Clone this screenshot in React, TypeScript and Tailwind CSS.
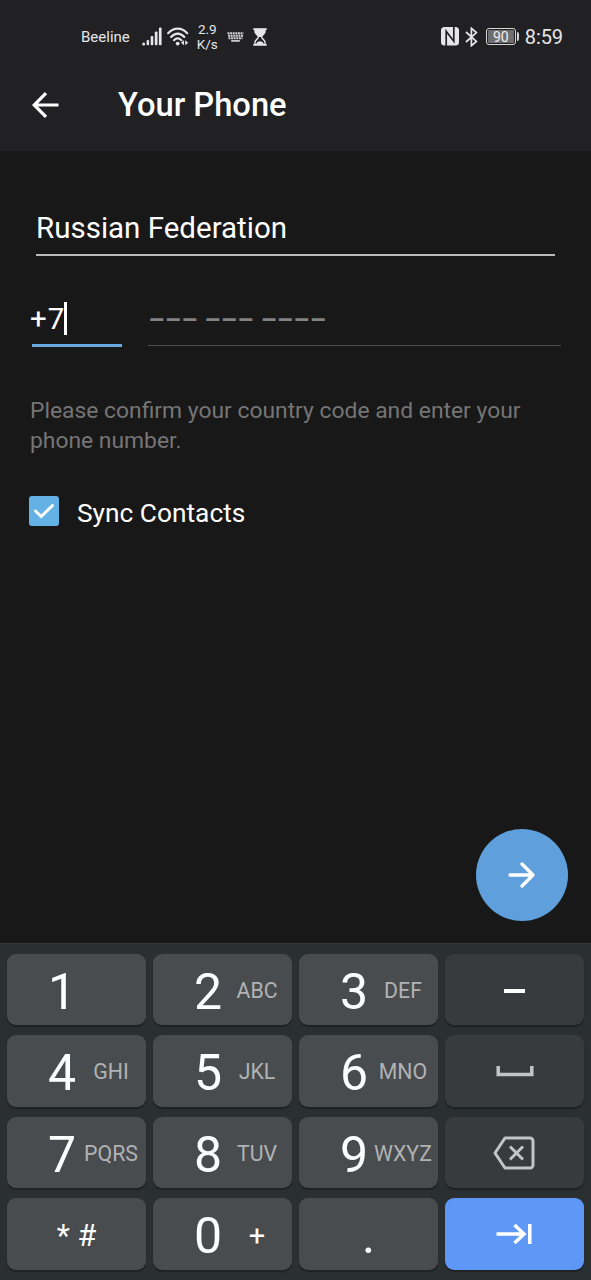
import type { ReactNode } from 'react';
import { clsx } from 'clsx';

type KeyTone = 'light' | 'dark' | 'accent';

type DigitKey = {
  digit: string;
  letters: string;
};

function SignalIcon() {
  return (
    <svg width="20" height="19" viewBox="0 0 20 19" fill="#e6e6e8">
      <circle cx="1.7" cy="16.9" r="1.5" />
      <rect x="4.6" y="13" width="2.5" height="5.3" rx="1" />
      <rect x="8.7" y="9" width="2.6" height="9.3" rx="1" />
      <rect x="12.8" y="4.6" width="2.7" height="13.7" rx="1" />
      <rect x="16.9" y="0.5" width="2.7" height="17.8" rx="1" />
    </svg>
  );
}

function WifiIcon() {
  return (
    <svg width="23" height="19" viewBox="0 0 23 19" fill="none" stroke="#e6e6e8" strokeWidth="2.2" strokeLinecap="round">
      <path d="M1.2 6.2C6.9 .2 14.5 .2 20.2 6.2" />
      <path d="M4.1 9.9C8.3 5.6 13.1 5.6 17.3 9.9" />
      <path d="M7 13.2C9.5 10.7 11.9 10.7 14.4 13.2" />
      <circle cx="10.7" cy="16.6" r="1.9" fill="#e6e6e8" stroke="none" />
      <path d="M17 13.2v5L14 15.7zM18.2 13.2v5L21.2 15.7z" fill="#e6e6e8" stroke="none" />
    </svg>
  );
}

function KeyboardIcon() {
  return (
    <svg width="17" height="10" viewBox="0 0 17 10" stroke="#d2d2d4" strokeWidth="2">
      <path d="M.5 1.2h16" strokeDasharray="2 .6" />
      <path d="M1 3.7h15" strokeDasharray="2 .6" />
      <path d="M1.5 6.2h14" strokeDasharray="2 .6" />
      <path d="M4.2 8.9h8.6" strokeWidth="1.7" />
    </svg>
  );
}

function HourglassIcon() {
  return (
    <svg width="14" height="18" viewBox="0 0 14 18" fill="none" stroke="#e6e6e8">
      <path d="M.3 1.1h13.4M.3 16.9h13.4" strokeWidth="1.8" />
      <path d="M2 1.5h10v2.3c0 2-3.4 3.4-3.4 5.2s3.4 3 3.4 5v2.5M2 1.5v2.3c0 2 3.4 3.4 3.4 5.2S2 12 2 14v2.5" strokeWidth="1.4" />
      <path d="M2 1.5h10v2.3C12 5.8 8.6 7.2 8.6 9H5.4C5.4 7.2 2 5.8 2 3.8z" fill="#e6e6e8" stroke="none" />
      <path d="M3.2 16.2c.4-2.2 2.2-3 3.8-3s3.4.8 3.8 3z" fill="#e6e6e8" stroke="none" />
    </svg>
  );
}

function NfcIcon() {
  return (
    <svg width="18" height="19" viewBox="0 0 18 19">
      <rect width="18" height="18.5" rx="3.5" fill="#e6e6e8" />
      <path d="M5.2 19V4.2L12.8 14.3V0" fill="none" stroke="#212124" strokeWidth="1.7" />
    </svg>
  );
}

function BluetoothIcon() {
  return (
    <svg width="13" height="20" viewBox="0 0 13 20" fill="none" stroke="#e6e6e8" strokeWidth="1.7">
      <path d="M1 5l10.4 9.4L6.4 18.7V1.3l5 4.3L1 15" />
    </svg>
  );
}

function Battery({ level }: { level: number }) {
  return (
    <div className="flex items-center gap-px">
      <div className="flex h-[17px] w-[30px] items-center justify-center rounded-[3px] border border-[#d6d6d8] p-px">
        <span className="h-full w-full rounded-[1px] bg-[#6e6e71] text-center text-[14px] leading-[14px] text-[#f0f0f0]">
          {level}
        </span>
      </div>
      <div className="h-[9px] w-[2px] rounded-r-sm bg-[#d6d6d8]" />
    </div>
  );
}

function StatusBar() {
  return (
    <div className="flex h-[73px] items-center pl-[81px] pr-7 text-[#e6e6e8]">
      <span className="text-[15px] leading-5">Beeline</span>
      <div className="ml-[12.5px] flex items-center">
        <SignalIcon />
        <div className="ml-[5px]">
          <WifiIcon />
        </div>
      </div>
      <div className="ml-[6px] w-[22px] text-center text-[13.5px] leading-[15px]">
        <div>2.9</div>
        <div>K/s</div>
      </div>
      <div className="ml-[8.5px]">
        <KeyboardIcon />
      </div>
      <div className="ml-[9px]">
        <HourglassIcon />
      </div>
      <div className="ml-auto flex items-center">
        <NfcIcon />
        <div className="ml-[6px] mr-[8px]">
          <BluetoothIcon />
        </div>
        <Battery level={90} />
        <span className="ml-[6px] text-[20px] leading-6 tracking-[-0.1px]">8:59</span>
      </div>
    </div>
  );
}

function Header() {
  return (
    <header className="h-[151px] bg-[#212124]">
      <StatusBar />
      <div className="flex h-16 items-center pl-8">
        <svg width="28" height="28" viewBox="0 0 28 28" fill="none" stroke="#fff" strokeWidth="3.2">
          <path d="M26.5 14H3M14 2.2L2.2 14 14 25.8" />
        </svg>
        <h1 className="ml-[58px] text-[32.7px] font-medium leading-10 text-white">Your Phone</h1>
      </div>
    </header>
  );
}

function PhoneForm() {
  return (
    <div className="pt-[54px]">
      <div className="ml-9 h-[51px] w-[519px] border-b-2 border-[#b9b9b9] text-[29.5px] leading-[47px] text-white">
        Russian Federation
      </div>

      <div className="mt-[39px] flex pl-[30px]">
        <div className="w-[92px]">
          <div className="flex h-[49px] items-center text-[29.5px] text-white">
            <span className="tracking-[1px]">+7</span>
            <span className="-ml-px -mt-[3px] h-[33px] w-[3px] bg-white" />
          </div>
          <div className="ml-[2px] h-[3px] bg-[#6aaae0]" />
        </div>
        <div className="ml-[26px] h-[51px] w-[413px] border-b border-[#4c4c4c] pl-[0.5px] text-[25.4px] font-bold leading-[51px] tracking-[0.44px] text-[#838383]">
          ––– ––– ––––
        </div>
      </div>

      <p className="ml-[30px] mt-[49px] w-[520px] text-[22.85px] leading-[30px] text-[#757575]">
        Please confirm your country code and enter your phone number.
      </p>

      <label className="ml-[29px] mt-[38px] flex items-center">
        <span className="flex h-[30px] w-[30px] items-center justify-center rounded-[3px] bg-[#63b1e5]">
          <svg width="22" height="18" viewBox="0 0 22 18" fill="none" stroke="#fff" strokeWidth="3" strokeLinecap="round">
            <path d="M2.5 9l5.7 5.5L19.5 3.5" />
          </svg>
        </span>
        <span className="ml-[18px] mt-1 text-[26.3px] leading-[30px] text-white">Sync Contacts</span>
      </label>
    </div>
  );
}

function Key({ tone = 'light', className, children }: { tone?: KeyTone; className?: string; children: ReactNode }) {
  return (
    <button
      className={clsx(
        'flex h-[71.5px] items-center rounded-[9px] text-[#fcfdff] shadow-[0_2px_1px_#1e2225]',
        tone === 'light' && 'bg-[#494c4e]',
        tone === 'dark' && 'bg-[#373b3e]',
        tone === 'accent' && 'bg-[#5e97f6]',
        className,
      )}
    >
      {children}
    </button>
  );
}

function Digit({ digit, letters }: DigitKey) {
  return (
    <Key className="pl-[35px]">
      <span className="w-10 pt-[5px] text-center text-[50px] leading-[60px]">{digit}</span>
      <span className="-ml-[1px] flex w-[60px] justify-center pt-[3px] text-[21.3px] leading-6 text-[#b0b2b4]">
        {letters}
      </span>
    </Key>
  );
}

function Keypad() {
  return (
    <div className="grid h-[337px] grid-cols-[repeat(4,139px)] content-start gap-x-[7px] gap-y-[10px] border-t border-[#34393c] bg-[#2a2f32] pl-[7px] pt-[9.5px]">
      <Digit digit="1" letters="" />
      <Digit digit="2" letters="ABC" />
      <Digit digit="3" letters="DEF" />
      <Key tone="dark" className="justify-center">
        <span className="mt-[4px] h-[4px] w-[21px] bg-white" />
      </Key>

      <Digit digit="4" letters="GHI" />
      <Digit digit="5" letters="JKL" />
      <Digit digit="6" letters="MNO" />
      <Key tone="dark" className="justify-center">
        <svg className="mt-px" width="38" height="12" viewBox="0 0 38 12" fill="none" stroke="#c3c4c6" strokeWidth="3.5">
          <path d="M2.2 1v8.5h33.6V1" />
        </svg>
      </Key>

      <Digit digit="7" letters="PQRS" />
      <Digit digit="8" letters="TUV" />
      <Digit digit="9" letters="WXYZ" />
      <Key tone="dark" className="justify-center">
        <svg className="mr-[2px] mt-[2px]" width="42" height="34" viewBox="0 0 42 34" fill="none" stroke="#c3c4c6" strokeWidth="3" strokeLinejoin="round">
          <path d="M12 2h25a3 3 0 0 1 3 3v24a3 3 0 0 1-3 3H12L2 17z" />
          <path d="M17 10.5l13 13M30 10.5l-13 13" />
        </svg>
      </Key>

      <Key className="justify-center">
        <span className="pt-[4px] text-[30.5px] leading-9">* #</span>
      </Key>
      <Key className="pl-[35px]">
        <span className="w-10 pt-[5px] text-center text-[50px] leading-[60px]">0</span>
        <span className="-ml-[1px] w-[60px] pt-[5px] text-center text-[29px] leading-8">+</span>
      </Key>
      <Key className="justify-center">
        <span className="pt-[5px] text-[50px] leading-[60px]">.</span>
      </Key>
      <Key tone="accent" className="justify-center">
        <svg className="mr-px" width="36" height="22" viewBox="0 0 36 22" fill="none" stroke="#fff" strokeWidth="3.5">
          <path d="M.5 11H28M18.5 2l9.5 9-9.5 9M33.8 1v20" />
        </svg>
      </Key>
    </div>
  );
}

export default function App() {
  return (
    <div className="flex h-[1280px] w-[591px] flex-col overflow-hidden bg-[#181818] font-['Roboto',sans-serif]">
      <Header />
      <main className="flex flex-1 flex-col">
        <PhoneForm />
        <button className="mb-[22px] ml-auto mr-[23px] mt-auto flex h-[92px] w-[92px] items-center justify-center rounded-full bg-[#5fa0dc]">
          <svg className="mr-[2px]" width="28" height="28" viewBox="0 0 28 28" fill="none" stroke="#fff" strokeWidth="3.3" strokeLinecap="round" strokeLinejoin="round">
            <path d="M3 14h23M15 3l11 11-11 11" />
          </svg>
        </button>
      </main>
      <Keypad />
    </div>
  );
}
